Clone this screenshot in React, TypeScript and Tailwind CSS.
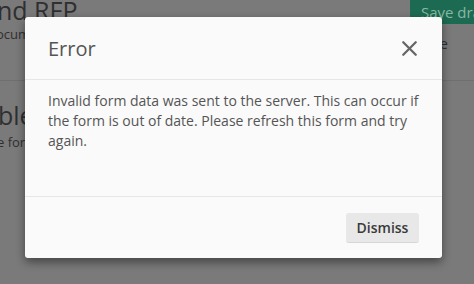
import { X } from "lucide-react";

export default function App() {
  return (
    <div
      className="relative w-[474px] h-[284px] overflow-hidden bg-[#7a7a7a]"
      style={{ fontFamily: '"Open Sans", "Noto Sans", sans-serif' }}
    >
      {/* page behind the overlay */}
      <div className="flex justify-between">
        <div className="flex flex-col ml-[-3px]">
          <span className="text-[25px] leading-[22px] text-[#2f2f2f] mt-[-1px]">nd RFP</span>
          <span className="text-[13px] leading-[16px] text-[#2f2f2f] mt-[5px] ml-[-1px]">ocument</span>
          <span className="text-[25px] leading-[30px] text-[#2f2f2f] mt-[58px] ml-[1px]">ble</span>
          <span className="text-[13px] leading-[16px] text-[#2f2f2f] mt-[4px]">e for</span>
        </div>
        <div className="flex flex-col items-end">
          <div className="w-[64px] h-[24px] bg-[#1c6a51] pl-[11px] text-[15px] leading-[24px] text-[#87b8a2] whitespace-nowrap overflow-hidden">
            Save draft
          </div>
          <span className="text-[15px] text-[#2f2f2f] mt-[8px] mr-[26px]">e</span>
        </div>
      </div>
      <div className="absolute left-0 right-0 top-[80px] h-px bg-[#6f6f6f]" />

      {/* modal */}
      <div className="absolute left-[25px] top-[17px] w-[417px] h-[241px] bg-[#fafafa] rounded-[3px] shadow-[0_4px_10px_rgba(0,0,0,0.45)] flex flex-col">
        <div className="h-[63px] flex items-center justify-between pl-[23px] pr-[20px] border-b border-[#e6e6e6]">
          <h2 className="text-[20px] text-[#555555] pt-[1px]">Error</h2>
          <X className="w-[25px] h-[25px] text-[#666666]" strokeWidth={2.2} />
        </div>
        <div className="flex-1 px-[23px] pt-[11px] text-[14px] leading-[20px] text-[#555555] border-b border-[#e6e6e6]">
          Invalid form data was sent to the server. This can occur if the form is out of date. Please refresh this form and try again.
        </div>
        <div className="h-[61px] flex items-center justify-end pr-[23px]">
          <button className="w-[73px] h-[30px] rounded-[3px] bg-[#e8e8e8] border-b border-[#d6d6d6] text-[14px] font-semibold text-[#3a3a3a]">
            Dismiss
          </button>
        </div>
      </div>
    </div>
  );
}
